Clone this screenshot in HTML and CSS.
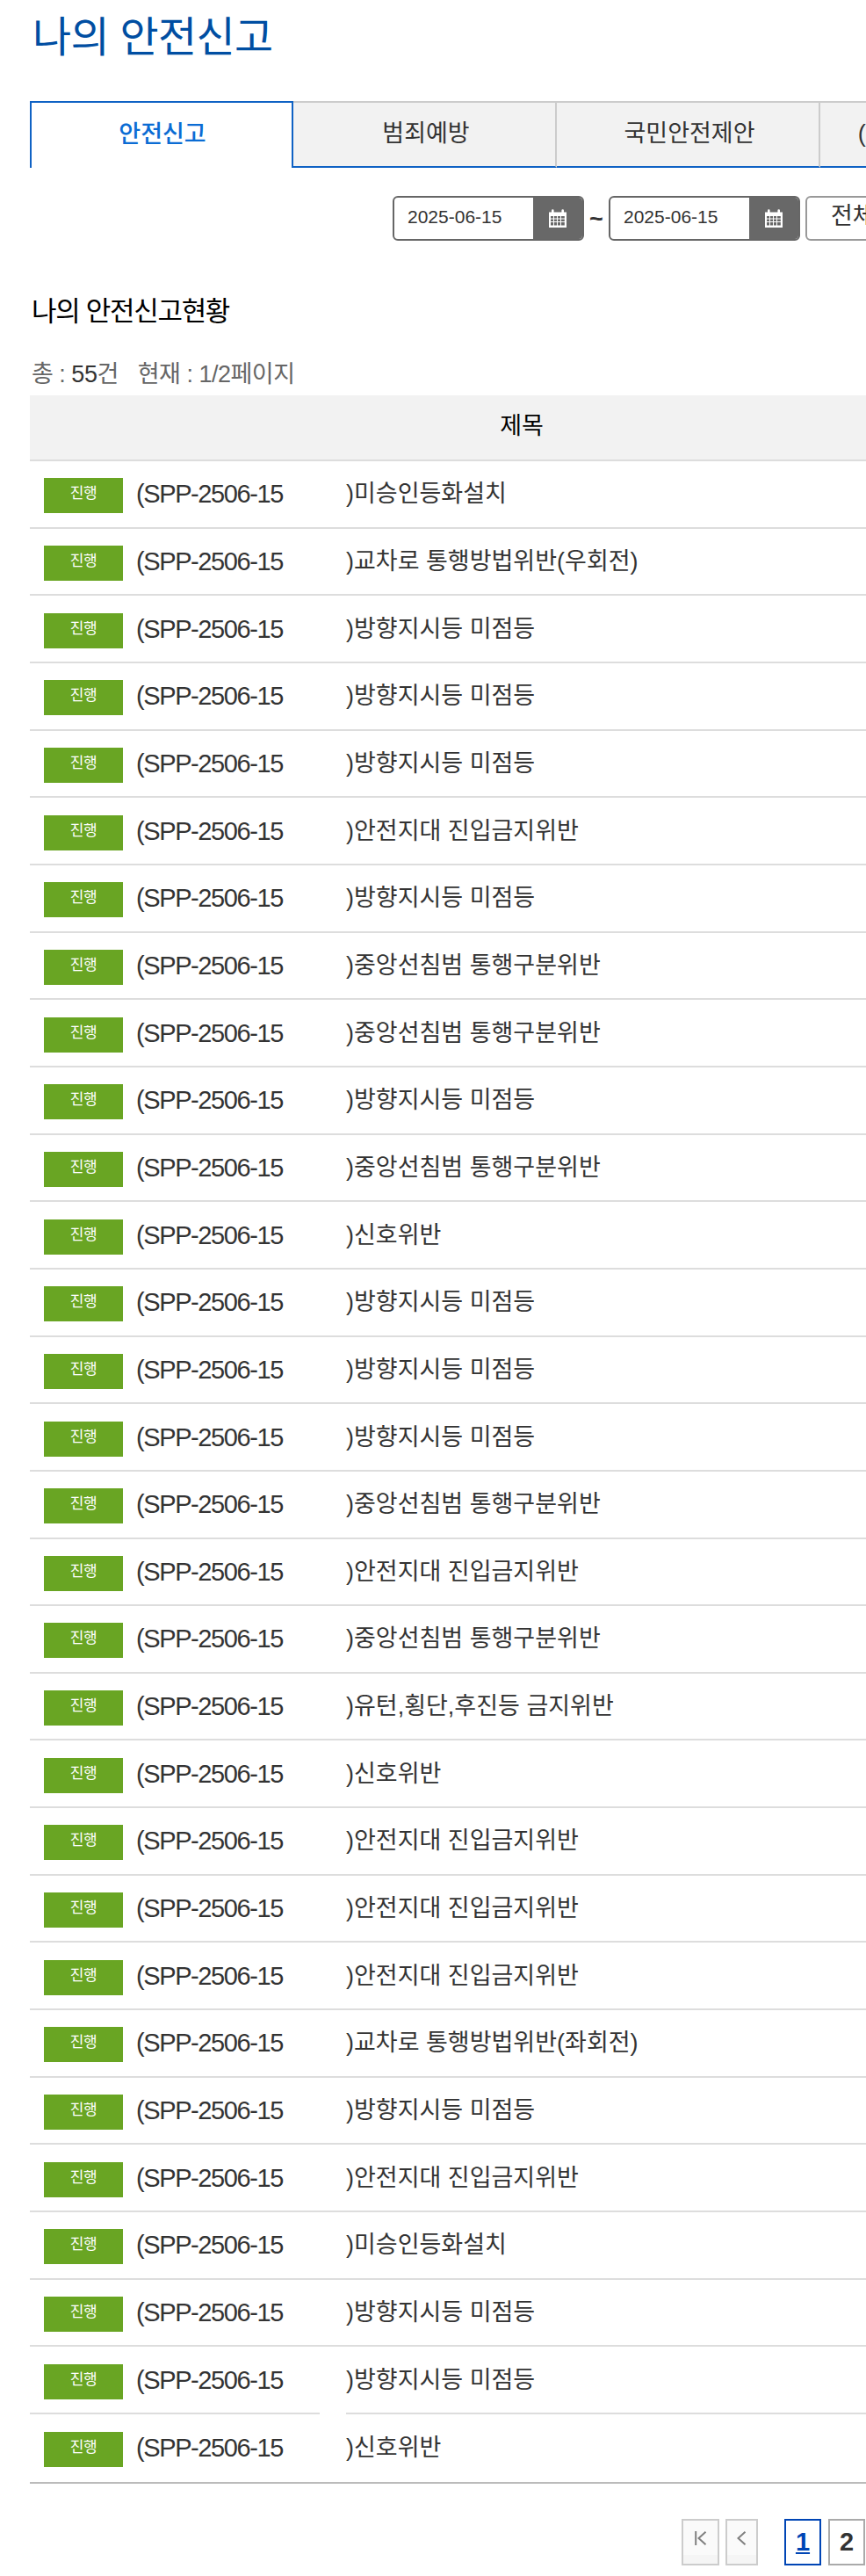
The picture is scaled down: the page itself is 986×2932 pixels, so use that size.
FILE: index.html
```html
<!DOCTYPE html>
<html lang="ko">
<head>
<meta charset="utf-8">
<title>나의 안전신고</title>
<link rel="stylesheet" href="styles.css">
</head>
<body>
<div class="page">
  <h1 class="title">나의 안전신고</h1>
  <nav class="tabs">
    <a class="tab active">안전신고</a>
    <a class="tab">범죄예방</a>
    <a class="tab">국민안전제안</a>
    <a class="tab">(구)안전신문고내역</a>
  </nav>
  <div class="filter">
    <div class="date"><span class="date-val">2025-06-15</span><span class="cal"><svg viewBox="0 0 22 22" width="22" height="22"><path fill="#fff" d="M1 3.500h3V1.600a1.300 1.300 0 0 1 2.600 0v1.900h8.800V1.600a1.300 1.300 0 0 1 2.600 0v1.900h3V21H1z"/><path fill="#686868" d="M3 8h3v2.500H3zM7 8h3v2.500H7zM11 8h3v2.500h-3zM15 8h3.800v2.500H15zM3 11.500h3V14H3zM7 11.500h3V14H7zM11 11.500h3V14h-3zM15 11.500h3.800V14H15zM3 15h3v3.500H3zM7 15h3v3.500H7zM11 15h3v3.500h-3zM15 15h3.800v3.500H15z"/></svg></span></div>
    <span class="tilde">~</span>
    <div class="date"><span class="date-val">2025-06-15</span><span class="cal"><svg viewBox="0 0 22 22" width="22" height="22"><path fill="#fff" d="M1 3.500h3V1.600a1.300 1.300 0 0 1 2.600 0v1.900h8.800V1.600a1.300 1.300 0 0 1 2.600 0v1.900h3V21H1z"/><path fill="#686868" d="M3 8h3v2.500H3zM7 8h3v2.500H7zM11 8h3v2.500h-3zM15 8h3.800v2.500H15zM3 11.500h3V14H3zM7 11.500h3V14H7zM11 11.500h3V14h-3zM15 11.500h3.800V14H15zM3 15h3v3.500H3zM7 15h3v3.500H7zM11 15h3v3.500h-3zM15 15h3.800v3.500H15z"/></svg></span></div>
    <div class="select">전체</div>
  </div>
  <h2 class="sub">나의 안전신고현황</h2>
  <p class="count">총 : <b>55</b>건 <span class="cur">현재 : 1/2페이지</span></p>
  <div class="list">
    <div class="head">제목</div>
    <div class="row"><span class="badge">진행</span><span class="no">(SPP-2506-15</span><span class="name">)미승인등화설치</span></div>
    <div class="row"><span class="badge">진행</span><span class="no">(SPP-2506-15</span><span class="name">)교차로 통행방법위반(우회전)</span></div>
    <div class="row"><span class="badge">진행</span><span class="no">(SPP-2506-15</span><span class="name">)방향지시등 미점등</span></div>
    <div class="row"><span class="badge">진행</span><span class="no">(SPP-2506-15</span><span class="name">)방향지시등 미점등</span></div>
    <div class="row"><span class="badge">진행</span><span class="no">(SPP-2506-15</span><span class="name">)방향지시등 미점등</span></div>
    <div class="row"><span class="badge">진행</span><span class="no">(SPP-2506-15</span><span class="name">)안전지대 진입금지위반</span></div>
    <div class="row"><span class="badge">진행</span><span class="no">(SPP-2506-15</span><span class="name">)방향지시등 미점등</span></div>
    <div class="row"><span class="badge">진행</span><span class="no">(SPP-2506-15</span><span class="name">)중앙선침범 통행구분위반</span></div>
    <div class="row"><span class="badge">진행</span><span class="no">(SPP-2506-15</span><span class="name">)중앙선침범 통행구분위반</span></div>
    <div class="row"><span class="badge">진행</span><span class="no">(SPP-2506-15</span><span class="name">)방향지시등 미점등</span></div>
    <div class="row"><span class="badge">진행</span><span class="no">(SPP-2506-15</span><span class="name">)중앙선침범 통행구분위반</span></div>
    <div class="row"><span class="badge">진행</span><span class="no">(SPP-2506-15</span><span class="name">)신호위반</span></div>
    <div class="row"><span class="badge">진행</span><span class="no">(SPP-2506-15</span><span class="name">)방향지시등 미점등</span></div>
    <div class="row"><span class="badge">진행</span><span class="no">(SPP-2506-15</span><span class="name">)방향지시등 미점등</span></div>
    <div class="row"><span class="badge">진행</span><span class="no">(SPP-2506-15</span><span class="name">)방향지시등 미점등</span></div>
    <div class="row"><span class="badge">진행</span><span class="no">(SPP-2506-15</span><span class="name">)중앙선침범 통행구분위반</span></div>
    <div class="row"><span class="badge">진행</span><span class="no">(SPP-2506-15</span><span class="name">)안전지대 진입금지위반</span></div>
    <div class="row"><span class="badge">진행</span><span class="no">(SPP-2506-15</span><span class="name">)중앙선침범 통행구분위반</span></div>
    <div class="row"><span class="badge">진행</span><span class="no">(SPP-2506-15</span><span class="name">)유턴,횡단,후진등 금지위반</span></div>
    <div class="row"><span class="badge">진행</span><span class="no">(SPP-2506-15</span><span class="name">)신호위반</span></div>
    <div class="row"><span class="badge">진행</span><span class="no">(SPP-2506-15</span><span class="name">)안전지대 진입금지위반</span></div>
    <div class="row"><span class="badge">진행</span><span class="no">(SPP-2506-15</span><span class="name">)안전지대 진입금지위반</span></div>
    <div class="row"><span class="badge">진행</span><span class="no">(SPP-2506-15</span><span class="name">)안전지대 진입금지위반</span></div>
    <div class="row"><span class="badge">진행</span><span class="no">(SPP-2506-15</span><span class="name">)교차로 통행방법위반(좌회전)</span></div>
    <div class="row"><span class="badge">진행</span><span class="no">(SPP-2506-15</span><span class="name">)방향지시등 미점등</span></div>
    <div class="row"><span class="badge">진행</span><span class="no">(SPP-2506-15</span><span class="name">)안전지대 진입금지위반</span></div>
    <div class="row"><span class="badge">진행</span><span class="no">(SPP-2506-15</span><span class="name">)미승인등화설치</span></div>
    <div class="row"><span class="badge">진행</span><span class="no">(SPP-2506-15</span><span class="name">)방향지시등 미점등</span></div>
    <div class="row masked"><span class="badge">진행</span><span class="no">(SPP-2506-15</span><span class="name">)방향지시등 미점등</span></div>
    <div class="row"><span class="badge">진행</span><span class="no">(SPP-2506-15</span><span class="name">)신호위반</span></div>
  </div>
  <div class="pager">
    <a class="pg nav first"><svg viewBox="0 0 14 16" width="14" height="16"><path d="M1.200 0v16M12.500 .8 4.500 8l8 7.200" fill="none" stroke="#808080" stroke-width="2"/></svg></a>
    <a class="pg nav prev"><svg viewBox="0 0 11 16" width="11" height="16"><path d="M9.500 .8 1.500 8l8 7.200" fill="none" stroke="#808080" stroke-width="2"/></svg></a>
    <a class="pg on">1</a>
    <a class="pg num">2</a>
  </div>
</div>
</body>
</html>
```
FILE: styles.css
```css
* { box-sizing: border-box; }
html, body { margin: 0; padding: 0; background: #fff; }
body { font-family: "Liberation Sans", "Noto Sans CJK KR", sans-serif; color: #333; }
.page { width: 986px; height: 2932px; overflow: hidden; padding-left: 34px; }
.title { margin: 0; padding: 14px 0 0 3px; height: 115px; font-size: 48px; line-height: 57px; font-weight: 400; color: #004ea2; letter-spacing: -0.7px; }
.tabs { display: flex; width: 1200px; height: 76px; }
.tab { flex: 0 0 300px; display: flex; align-items: center; justify-content: center; padding: 0 0 8px 4px; height: 76px; font-size: 27px; color: #333; background: #f2f2f2; border-top: 2px solid #ccc; border-right: 2px solid #ccc; border-bottom: 2px solid #0f62c4; white-space: nowrap; }
.tab.active { padding-left: 2px; color: #0b6cd4; font-weight: 500; background: #fff; border: 2px solid #0f62c4; border-bottom: 0; }
.filter { display: flex; align-items: center; width: 1200px; height: 51px; margin-top: 32px; padding-left: 413px; }
.date { flex: none; display: flex; width: 218px; height: 51px; border: 2px solid #666; border-radius: 6px; background: #fff; overflow: hidden; }
.date-val { flex: 1; padding-left: 15px; font-size: 21px; line-height: 44px; color: #333; }
.cal { flex: 0 0 56px; display: flex; align-items: center; justify-content: center; background: #686868; }
.tilde { flex: none; width: 28px; text-align: center; font-size: 27px; line-height: 40px; font-weight: 700; color: #333; }
.select { flex: 0 0 200px; height: 51px; margin-left: 6px; padding-left: 27px; border: 2px solid #999; border-radius: 6px; font-size: 27px; line-height: 42px; color: #333; }
.sub { margin: 60px 0 0; padding-left: 2px; height: 42px; font-size: 31px; line-height: 42px; font-weight: 400; color: #000; letter-spacing: -1.3px; }
.count { margin: 32px 0 6px; padding-left: 2px; height: 36px; font-size: 27px; line-height: 36px; color: #666; letter-spacing: -0.5px; }
.count b { font-weight: 400; color: #333; }
.cur { margin-left: 15px; }
.list { width: 1120px; border-bottom: 2px solid #bbb; }
.head { height: 75px; border-bottom: 2px solid #ddd; background: #f2f2f2; text-align: center; font-size: 27px; line-height: 70px; color: #000; }
.row { display: flex; align-items: center; height: 76.667px; padding-left: 16px; border-bottom: 2px solid #ddd; position: relative; }
.row:last-child { border-bottom: 0; }
.masked::after { content: ""; position: absolute; left: 330px; width: 30px; bottom: -3px; height: 4px; background: #fff; }
.badge { flex: 0 0 90px; height: 40px; margin-top: 4px; background: #69a523; color: #fff; font-size: 17px; letter-spacing: -0.5px; line-height: 36px; text-align: center; }
.no { flex: 0 0 254px; padding-left: 15px; font-size: 29px; letter-spacing: -1.4px; line-height: 40px; color: #333; }
.name { font-size: 27px; line-height: 40px; color: #333; }
.pager { display: flex; margin: 40px 0 0 742px; }
.pg { display: flex; align-items: center; justify-content: center; height: 53px; }
.nav { background: linear-gradient(#fafafa 80%, #f5f5f5 80%); border: 2px solid #ccc; padding-bottom: 8px; }
.first { width: 43px; }
.prev { width: 37px; margin-left: 7px; }
.on, .num { width: 42px; font-size: 29px; font-weight: 700; }
.on { margin-left: 30px; border: 2px solid #0045b5; color: #0045b5; text-decoration: underline; }
.num { margin-left: 8px; border: 2px solid #aaa; color: #333; }
```
